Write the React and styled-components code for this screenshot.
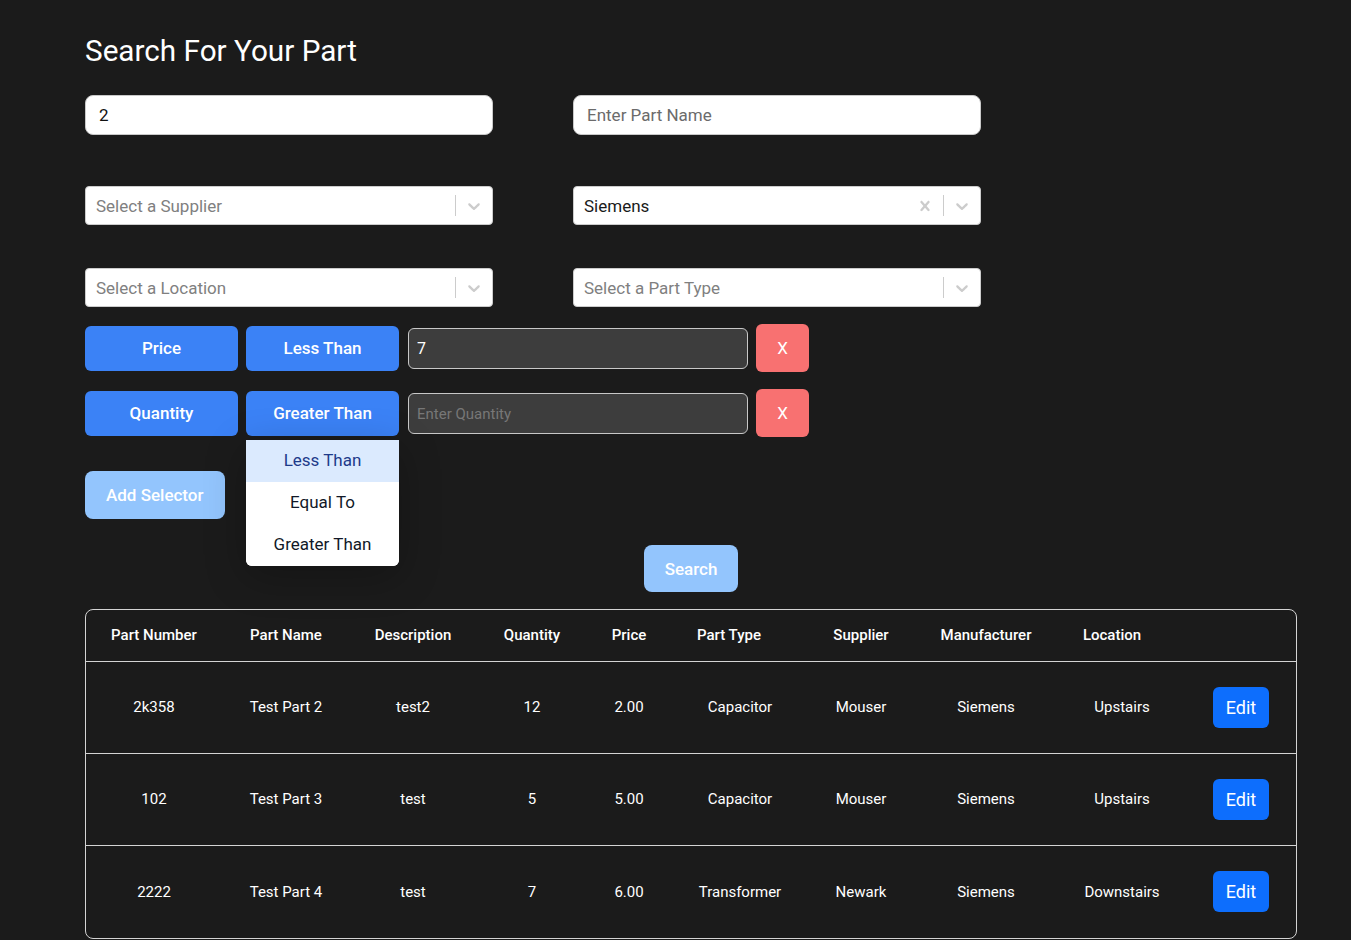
import React from "react";
import styled, { createGlobalStyle } from "styled-components";

const Global = createGlobalStyle`
  html, body { margin: 0; padding: 0; background: #1b1b1b; }
  body { font-family: Roboto, "Liberation Sans", sans-serif; color: #fff; }
  * { box-sizing: border-box; }
`;

const Page = styled.div`
  padding: 30px 54px 0 85px;
  min-height: 940px;
`;

const Title = styled.h1`
  margin: 0 0 23px;
  font-size: 29.7px;
  font-weight: 400;
  line-height: 42px;
  color: #fff;
`;

const FieldGrid = styled.div`
  display: grid;
  grid-template-columns: 408px 408px;
  column-gap: 80px;
  align-items: start;
`;

const FieldCell = styled.div`
  margin-bottom: ${(p) => p.$mb}px;
`;

const TextInput = styled.input`
  width: 100%;
  height: 40px;
  border-radius: 8px;
  border: 1px solid #c9c9c9;
  background: #fff;
  padding: 0 13px;
  font-family: Roboto, sans-serif;
  font-size: 17px;
  color: #111;
  outline: none;
  &::placeholder { color: #6b6b6b; }
`;

const Control = styled.div`
  display: flex;
  align-items: center;
  height: 39px;
  background: #fff;
  border: 1px solid #cccccc;
  border-radius: 4px;
`;

const ValueBox = styled.div`
  flex: 1;
  padding: 2px 10px;
  font-size: 17px;
  color: ${(p) => (p.$placeholder ? "#808080" : "#1a1a1a")};
`;

const Indicator = styled.div`
  display: flex;
  align-items: center;
  padding: 8px;
  color: #cccccc;
`;

const Separator = styled.span`
  width: 1px;
  align-self: stretch;
  margin: 8px 0;
  background: #cccccc;
`;

const Chevron = () => (
  <svg width="20" height="20" viewBox="0 0 20 20" fill="currentColor">
    <path d="M4.516 7.548c0.436-0.446 1.043-0.481 1.576 0l3.908 3.747 3.908-3.747c0.533-0.481 1.141-0.446 1.574 0 0.436 0.445 0.408 1.197 0 1.615-0.406 0.418-4.695 4.502-4.695 4.502-0.217 0.223-0.502 0.335-0.787 0.335s-0.57-0.112-0.789-0.335c0 0-4.287-4.084-4.695-4.502s-0.436-1.17 0-1.615z" />
  </svg>
);

const Cross = () => (
  <svg width="20" height="20" viewBox="0 0 20 20" fill="currentColor">
    <path d="M14.348 14.849c-0.469 0.469-1.229 0.469-1.697 0l-2.651-3.030-2.651 3.029c-0.469 0.469-1.229 0.469-1.697 0-0.469-0.469-0.469-1.229 0-1.697l2.758-3.15-2.759-3.152c-0.469-0.469-0.469-1.228 0-1.697s1.228-0.469 1.697 0l2.652 3.031 2.651-3.031c0.469-0.469 1.228-0.469 1.697 0s0.469 1.229 0 1.697l-2.758 3.152 2.758 3.15c0.469 0.469 0.469 1.229 0 1.698z" />
  </svg>
);

const Select = ({ value, placeholder }) => (
  <Control>
    <ValueBox $placeholder={!value}>{value || placeholder}</ValueBox>
    {value && (
      <Indicator>
        <Cross />
      </Indicator>
    )}
    <Separator />
    <Indicator>
      <Chevron />
    </Indicator>
  </Control>
);

const FilterList = styled.div`
  display: flex;
  flex-direction: column;
  gap: 17px;
  margin-top: 17px;
`;

const FilterRow = styled.div`
  display: flex;
  align-items: center;
  gap: 8px;
`;

const FieldButton = styled.button`
  width: 153px;
  height: 45px;
  border: none;
  border-radius: 6px;
  background: #3b82f6;
  color: #fff;
  font-family: Roboto, sans-serif;
  font-size: 17px;
  font-weight: 500;
  padding: 0;
`;

const OpWrap = styled.div`
  position: relative;
`;

const Menu = styled.div`
  position: absolute;
  top: 49px;
  left: 0;
  width: 153px;
  background: #fff;
  border-radius: 0 0 6px 6px;
  overflow: hidden;
  z-index: 5;
  box-shadow: 0 10px 40px rgba(0, 0, 0, 0.25);
`;

const MenuItem = styled.div`
  height: 42px;
  display: flex;
  align-items: center;
  justify-content: center;
  padding-bottom: 1px;
  font-size: 17px;
  color: ${(p) => (p.$active ? "#1e3a8a" : "#111827")};
  background: ${(p) => (p.$active ? "#dbeafe" : "#fff")};
`;

const DarkInput = styled.input`
  width: 340px;
  height: 41px;
  margin-left: 1px;
  background: #3d3d3d;
  border: 1px solid #c8c8c8;
  border-radius: 6px;
  padding: 0 8px;
  color: #fff;
  font-family: Roboto, sans-serif;
  font-size: 16px;
  outline: none;
  &::placeholder { color: #777; font-size: 15px; }
`;

const RemoveButton = styled.button`
  width: 53px;
  height: 48px;
  border: none;
  border-radius: 6px;
  background: #f87171;
  color: #fff;
  font-family: Roboto, sans-serif;
  font-size: 17px;
  padding: 0;
`;

const SoftButton = styled.button`
  height: ${(p) => p.$h}px;
  padding: 0 ${(p) => p.$px}px;
  border: none;
  border-radius: 8px;
  background: #93c5fd;
  color: #fff;
  font-family: Roboto, sans-serif;
  font-size: 17px;
  font-weight: 500;
`;

const AddRow = styled.div`
  margin-top: 34px;
`;

const SearchRow = styled.div`
  display: flex;
  justify-content: center;
  width: 1212px;
  margin-top: 26px;
`;

const Table = styled.div`
  width: 1212px;
  margin-top: 17px;
  border: 1px solid #d4d4d4;
  border-radius: 8px;
  overflow: hidden;
`;

const cols = "136px 128px 126px 112px 82px 140px 102px 148px 124px 112px";

const HeadRow = styled.div`
  display: grid;
  grid-template-columns: ${cols};
  height: 52px;
  padding-bottom: 2px;
  align-items: center;
  border-bottom: 1px solid #d4d4d4;
`;

const BodyRow = styled.div`
  display: grid;
  grid-template-columns: ${cols};
  height: 92px;
  padding-bottom: 1px;
  align-items: center;
  border-bottom: ${(p) => (p.$last ? "none" : "1px solid #d4d4d4")};
`;

const HeadCell = styled.div`
  text-align: center;
  font-size: 15px;
  font-weight: 500;
  padding-right: ${(p) => p.$shift || 0}px;
`;

const Cell = styled.div`
  text-align: center;
  font-size: 15px;
  font-weight: 400;
`;

const EditButton = styled.button`
  justify-self: center;
  margin-left: 2px;
  width: 56px;
  height: 41px;
  border: none;
  border-radius: 6px;
  background: #0d6efd;
  color: #fff;
  font-family: Roboto, sans-serif;
  font-size: 18px;
  padding: 0;
`;

const headers = [
  ["Part Number", 0],
  ["Part Name", 0],
  ["Description", 0],
  ["Quantity", 0],
  ["Price", 0],
  ["Part Type", 22],
  ["Supplier", 0],
  ["Manufacturer", 0],
  ["Location", 20],
  ["", 0],
];

const rows = [
  ["2k358", "Test Part 2", "test2", "12", "2.00", "Capacitor", "Mouser", "Siemens", "Upstairs"],
  ["102", "Test Part 3", "test", "5", "5.00", "Capacitor", "Mouser", "Siemens", "Upstairs"],
  ["2222", "Test Part 4", "test", "7", "6.00", "Transformer", "Newark", "Siemens", "Downstairs"],
];

export default function App() {
  return (
    <>
      <Global />
      <Page>
        <Title>Search For Your Part</Title>
        <FieldGrid>
          <FieldCell $mb={51}>
            <TextInput defaultValue="2" />
          </FieldCell>
          <FieldCell $mb={51}>
            <TextInput placeholder="Enter Part Name" />
          </FieldCell>
          <FieldCell $mb={43}>
            <Select placeholder="Select a Supplier" />
          </FieldCell>
          <FieldCell $mb={43}>
            <Select value="Siemens" />
          </FieldCell>
          <FieldCell $mb={0}>
            <Select placeholder="Select a Location" />
          </FieldCell>
          <FieldCell $mb={0}>
            <Select placeholder="Select a Part Type" />
          </FieldCell>
        </FieldGrid>

        <FilterList>
          <FilterRow>
            <FieldButton>Price</FieldButton>
            <OpWrap>
              <FieldButton>Less Than</FieldButton>
            </OpWrap>
            <DarkInput defaultValue="7" />
            <RemoveButton>X</RemoveButton>
          </FilterRow>
          <FilterRow>
            <FieldButton>Quantity</FieldButton>
            <OpWrap>
              <FieldButton>Greater Than</FieldButton>
              <Menu>
                <MenuItem $active>Less Than</MenuItem>
                <MenuItem>Equal To</MenuItem>
                <MenuItem>Greater Than</MenuItem>
              </Menu>
            </OpWrap>
            <DarkInput placeholder="Enter Quantity" />
            <RemoveButton>X</RemoveButton>
          </FilterRow>
        </FilterList>

        <AddRow>
          <SoftButton $h={48} $px={21}>Add Selector</SoftButton>
        </AddRow>

        <SearchRow>
          <SoftButton $h={47} $px={21}>Search</SoftButton>
        </SearchRow>

        <Table>
          <HeadRow>
            {headers.map(([h, s], i) => (
              <HeadCell key={i} $shift={s}>{h}</HeadCell>
            ))}
          </HeadRow>
          {rows.map((r, i) => (
            <BodyRow key={i} $last={i === rows.length - 1}>
              {r.map((c, j) => (
                <Cell key={j}>{c}</Cell>
              ))}
              <EditButton>Edit</EditButton>
            </BodyRow>
          ))}
        </Table>
      </Page>
    </>
  );
}
